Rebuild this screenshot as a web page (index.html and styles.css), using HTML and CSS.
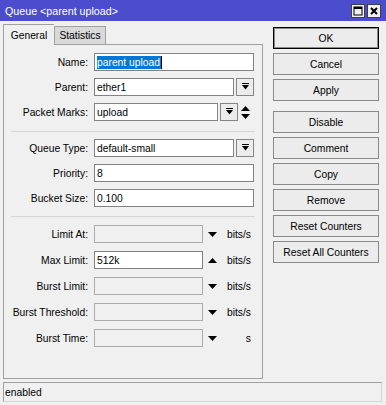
FILE: index.html
```html
<!DOCTYPE html>
<html>
<head>
<meta charset="utf-8">
<link rel="stylesheet" href="styles.css">
</head>
<body>
<div class="window">
  <div class="titlebar">
    <span class="title">Queue &lt;parent upload&gt;</span>
    <div class="tb-btns">
      <span class="tb-btn"><svg width="12" height="12" viewBox="0 0 12 12"><rect x="2" y="2" width="8" height="8" fill="none" stroke="#000" stroke-width="1"/><rect x="2" y="2" width="8" height="2" fill="#000"/></svg></span>
      <span class="tb-btn"><svg width="12" height="12" viewBox="0 0 12 12"><path d="M3 3 L9 9 M9 3 L3 9" stroke="#000" stroke-width="2"/></svg></span>
    </div>
  </div>
  <div class="main">
    <div class="left">
      <div class="tabs">
        <div class="tab active">General</div>
        <div class="tab">Statistics</div>
      </div>
      <div class="panel">
        <div class="section s1">
          <div class="row"><label class="lbl">Name:</label><div class="ctrl"><div class="inp w160"><span class="sel">parent upload</span></div></div></div>
          <div class="row"><label class="lbl">Parent:</label><div class="ctrl"><div class="inp w140">ether1</div><span class="dd"><svg width="7" height="8" viewBox="0 0 7 8"><rect x="0" y="0" width="7" height="1" fill="#000"/><path d="M0 2 H7 L3.5 6.5 Z" fill="#000"/></svg></span></div></div>
          <div class="row"><label class="lbl">Packet Marks:</label><div class="ctrl"><div class="inp w124">upload</div><span class="dd"><svg width="7" height="8" viewBox="0 0 7 8"><rect x="0" y="0" width="7" height="1" fill="#000"/><path d="M0 2 H7 L3.5 6.5 Z" fill="#000"/></svg></span><span class="updown"><svg width="9" height="13" viewBox="0 0 9 13"><path d="M0 5 H9 L4.5 0 Z" fill="#000"/><path d="M0 8 H9 L4.5 13 Z" fill="#000"/></svg></span></div></div>
        </div>
        <div class="sep"></div>
        <div class="section s2">
          <div class="row"><label class="lbl">Queue Type:</label><div class="ctrl"><div class="inp w140">default-small</div><span class="dd"><svg width="7" height="8" viewBox="0 0 7 8"><rect x="0" y="0" width="7" height="1" fill="#000"/><path d="M0 2 H7 L3.5 6.5 Z" fill="#000"/></svg></span></div></div>
          <div class="row"><label class="lbl">Priority:</label><div class="ctrl"><div class="inp w160">8</div></div></div>
          <div class="row"><label class="lbl">Bucket Size:</label><div class="ctrl"><div class="inp w160">0.100</div></div></div>
        </div>
        <div class="sep sep2"></div>
        <div class="section s3">
          <div class="row"><label class="lbl">Limit At:</label><div class="ctrl"><div class="inp w109 dis"></div><span class="tri"><svg width="9" height="5" viewBox="0 0 9 5"><path d="M0 0 H9 L4.5 5 Z" fill="#000"/></svg></span><span class="unit">bits/s</span></div></div>
          <div class="row"><label class="lbl">Max Limit:</label><div class="ctrl"><div class="inp w109">512k</div><span class="tri"><svg width="9" height="5" viewBox="0 0 9 5"><path d="M0 5 H9 L4.5 0 Z" fill="#000"/></svg></span><span class="unit">bits/s</span></div></div>
          <div class="row"><label class="lbl">Burst Limit:</label><div class="ctrl"><div class="inp w109 dis"></div><span class="tri"><svg width="9" height="5" viewBox="0 0 9 5"><path d="M0 0 H9 L4.5 5 Z" fill="#000"/></svg></span><span class="unit">bits/s</span></div></div>
          <div class="row"><label class="lbl">Burst Threshold:</label><div class="ctrl"><div class="inp w109 dis"></div><span class="tri"><svg width="9" height="5" viewBox="0 0 9 5"><path d="M0 0 H9 L4.5 5 Z" fill="#000"/></svg></span><span class="unit">bits/s</span></div></div>
          <div class="row"><label class="lbl">Burst Time:</label><div class="ctrl"><div class="inp w109 dis"></div><span class="tri"><svg width="9" height="5" viewBox="0 0 9 5"><path d="M0 0 H9 L4.5 5 Z" fill="#000"/></svg></span><span class="unit">s</span></div></div>
        </div>
      </div>
    </div>
    <div class="buttons">
      <div class="btn default">OK</div>
      <div class="btn">Cancel</div>
      <div class="btn">Apply</div>
      <div class="btn gap">Disable</div>
      <div class="btn">Comment</div>
      <div class="btn">Copy</div>
      <div class="btn">Remove</div>
      <div class="btn">Reset Counters</div>
      <div class="btn">Reset All Counters</div>
    </div>
  </div>
  <div class="status">enabled</div>
</div>
</body>
</html>
```

FILE: styles.css
```css
html, body {
  margin: 0;
  padding: 0;
  background: #f0f0f0;
}
.window {
  width: 386px;
  height: 405px;
  background: #f0f0f0;
  font-family: "Liberation Sans", Arial, sans-serif;
  font-size: 10.3px;
  color: #000;
  display: flex;
  flex-direction: column;
  overflow: hidden;
}
.titlebar {
  height: 21px;
  background: #4b4dce;
  display: flex;
  align-items: center;
  justify-content: space-between;
  padding: 0 5px 0 5px;
  box-sizing: border-box;
  flex: none;
}
.title {
  color: #fff;
  font-size: 10.7px;
}
.tb-btns {
  display: flex;
  gap: 2px;
}
.tb-btn {
  width: 14px;
  height: 14px;
  box-sizing: border-box;
  background: #f0f0f0;
  border: 1px solid #404040;
  display: flex;
  align-items: center;
  justify-content: center;
}
.main {
  display: flex;
  flex: none;
  height: 358px;
}
.left {
  margin-left: 3px;
  width: 260px;
  display: flex;
  flex-direction: column;
}
.tabs {
  margin-top: 3px;
  height: 20px;
  display: flex;
  align-items: flex-end;
  position: relative;
  z-index: 1;
}
.tab {
  height: 18px;
  box-sizing: border-box;
  border: 1px solid #a0a0a0;
  border-bottom: none;
  background: #d9d9d9;
  display: flex;
  align-items: center;
  justify-content: center;
  width: 52px;
}
.tab.active {
  height: 21px;
  width: 51px;
  margin-bottom: -1px;
  background: #f0f0f0;
  border-right: none;
  padding-top: 0;
}
.panel {
  height: 335px;
  box-sizing: border-box;
  border: 1px solid #a0a0a0;
  padding-top: 8px;
}
.section {
  display: flex;
  flex-direction: column;
  gap: 7px;
}
.s3 {
  gap: 8px;
}
.sep {
  height: 1px;
  background: #d5d5d5;
  margin: 10px 7px 7px 7px;
}
.sep2 {
  margin-top: 9px;
  margin-bottom: 8px;
}
.row {
  display: flex;
  align-items: center;
  height: 18px;
}
.lbl {
  width: 84px;
  text-align: right;
  margin-right: 6px;
  white-space: nowrap;
}
.ctrl {
  display: flex;
  align-items: center;
  height: 18px;
}
.inp {
  height: 18px;
  box-sizing: border-box;
  border: 1px solid #828282;
  background: #fff;
  padding-left: 2px;
  display: flex;
  align-items: center;
  white-space: nowrap;
}
.inp.dis {
  background: #f0f0f0;
  border-color: #adadad;
}
.w160 { width: 160px; }
.w140 { width: 140px; }
.w124 { width: 124px; }
.w109 { width: 109px; }
.sel {
  background: #0078d7;
  color: #fff;
  border-right: 1px solid #000;
  line-height: 13px;
  padding-right: 1px;
}
.dd {
  width: 18px;
  height: 18px;
  box-sizing: border-box;
  margin-left: 2px;
  border: 1px solid #858585;
  background: #ececec;
  display: flex;
  align-items: center;
  justify-content: center;
}
.updown {
  margin-left: 3px;
  display: flex;
}
.tri {
  margin-left: 5px;
  width: 9px;
  display: flex;
}
.unit {
  width: 26px;
  margin-left: 8px;
  text-align: right;
}
.buttons {
  margin-left: 10px;
  margin-top: 6px;
  width: 106px;
  display: flex;
  flex-direction: column;
  gap: 4px;
}
.btn {
  height: 22px;
  box-sizing: border-box;
  border: 1px solid #8a8a8a;
  background: #ececec;
  display: flex;
  align-items: center;
  justify-content: center;
  white-space: nowrap;
}
.btn.default {
  border: 1px solid #000;
  box-shadow: inset 0 0 0 1px #8a8a8a;
}
.btn.gap {
  margin-top: 6px;
}
.status {
  margin: 3px 4px 0 3px;
  height: 20px;
  box-sizing: border-box;
  border: 1px solid #a0a0a0;
  border-right-color: #d6d6d6;
  border-bottom-color: #d6d6d6;
  padding-left: 1px;
  display: flex;
  align-items: center;
}
```
